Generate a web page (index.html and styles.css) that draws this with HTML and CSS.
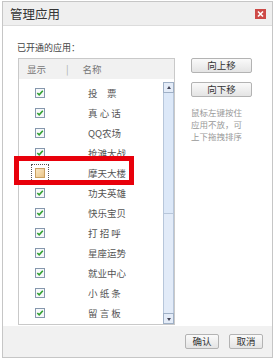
FILE: index.html
```html
<!DOCTYPE html>
<html lang="zh-CN">
<head>
    <meta charset="UTF-8">
    <title>管理应用</title>
    <link rel="stylesheet" href="styles.css">
</head>
<body>

    <div class="dialog">
        <div class="title-bar">
            <span class="title">管理应用</span>
            <span class="close">
                <svg width="11" height="10" viewBox="0 0 11 10">
                    <path d="M3 2.5 L8 7.5 M8 2.5 L3 7.5" stroke="#fff" stroke-width="1.6"/>
                </svg>
            </span>
        </div>

        <div class="main">
            <div class="label">已开通的应用：</div>
            <div class="content">
                <div class="list">
                    <div class="list-head">
                        <span class="col-show">显示</span>
                        <span class="sep">|</span>
                        <span class="col-name">名称</span>
                    </div>
                    <div class="list-body">
                        <div class="rows">
                            <div class="row"><i class="check"></i><span class="name">投　票</span></div>
                            <div class="row"><i class="check"></i><span class="name">真 心 话</span></div>
                            <div class="row"><i class="check"></i><span class="name">QQ农场</span></div>
                            <div class="row"><i class="check"></i><span class="name">抢滩大战</span></div>
                            <div class="row"><i class="check selected"></i><span class="name">摩天大楼</span></div>
                            <div class="row"><i class="check"></i><span class="name">功夫英雄</span></div>
                            <div class="row"><i class="check"></i><span class="name">快乐宝贝</span></div>
                            <div class="row"><i class="check"></i><span class="name">打 招 呼</span></div>
                            <div class="row"><i class="check"></i><span class="name">星座运势</span></div>
                            <div class="row"><i class="check"></i><span class="name">就业中心</span></div>
                            <div class="row"><i class="check"></i><span class="name">小 纸 条</span></div>
                            <div class="row"><i class="check"></i><span class="name">留 言 板</span></div>
                        </div>
                        <div class="scrollbar">
                            <div class="arrow up"></div>
                            <div class="thumb"></div>
                            <div class="track"></div>
                            <div class="arrow down"></div>
                        </div>
                    </div>
                    <div class="highlight"></div>
                </div>

                <div class="side">
                    <button class="btn move">向上移</button>
                    <button class="btn move">向下移</button>
                    <p class="hint">鼠标左键按住<br>应用不放，可<br>上下拖拽排序</p>
                </div>
            </div>
        </div>

        <div class="footer">
            <button class="btn small">确认</button>
            <button class="btn small">取消</button>
        </div>
    </div>

</body>
</html>
```

FILE: styles.css
```css
body {
    margin: 0;
    background: #fff;
    font-family: "Noto Sans CJK SC", "Noto Sans", sans-serif;
}
.dialog {
    width: 269px;
    height: 355px;
    margin: 1px 0 0 2px;
    border: 1px solid #c6c6c6;
    display: flex;
    flex-direction: column;
    background: #fff;
}
.title-bar {
    height: 23px;
    background: #efefef;
    border-bottom: 1px solid #dcdcdc;
    display: flex;
    align-items: center;
    justify-content: space-between;
    padding: 0 6px 0 7px;
}
.title {
    font-size: 12.5px;
    color: #333;
    line-height: 14px;
}
.close {
    width: 11px;
    height: 10px;
    background: #cd4a47;
    display: flex;
}
.main {
    flex: 1;
    padding: 16px 0 0 14px;
}
.label {
    font-size: 9px;
    line-height: 12px;
    color: #444;
    margin-bottom: 4px;
}
.content {
    display: flex;
    align-items: flex-start;
    padding-left: 1px;
}
.list {
    position: relative;
    width: 155px;
    height: 265px;
    border: 1px solid #c9c9c9;
    background: #fff;
}
.list-head {
    height: 20px;
    background: #f1f1f1;
    display: flex;
    align-items: center;
    font-size: 9.5px;
    color: #777;
}
.col-show {
    margin-left: 8px;
}
.sep {
    margin-left: 20px;
    color: #aaa;
}
.col-name {
    margin-left: 14px;
}
.list-body {
    display: flex;
    height: 245px;
}
.rows {
    flex: 1;
    padding-top: 4px;
}
.row {
    height: 20px;
    display: flex;
    align-items: center;
}
.check {
    width: 8px;
    height: 8px;
    margin-left: 16px;
    border: 1px solid #8597ad;
    background: #f6f8fa url("data:image/svg+xml,%3Csvg xmlns='http://www.w3.org/2000/svg' width='8' height='8'%3E%3Cpath d='M1.3 4 L3.2 5.8 L6.8 1.8' fill='none' stroke='%2330a030' stroke-width='1.6'/%3E%3C/svg%3E") no-repeat center;
}
.check.selected {
    background: linear-gradient(135deg, #fbe9c4, #e9c488);
    border-color: #c9a061;
    outline: 1px dotted #555;
    outline-offset: 3px;
}
.name {
    margin-left: 43px;
    font-size: 9.5px;
    color: #555;
    white-space: pre;
}
.scrollbar {
    width: 11px;
    margin-top: 3px;
    display: flex;
    flex-direction: column;
}
.arrow {
    height: 11px;
    background: #e4ecf8;
    border: 1px solid #9fb0c6;
    box-sizing: border-box;
    position: relative;
}
.arrow::after {
    content: "";
    position: absolute;
    left: 3px;
    border-left: 2px solid transparent;
    border-right: 2px solid transparent;
}
.arrow.up::after {
    top: 3px;
    border-bottom: 3px solid #445;
}
.arrow.down::after {
    top: 4px;
    border-top: 3px solid #445;
}
.thumb {
    height: 121px;
    background: #dce8f8;
    border: 1px solid #b7c6da;
    border-top: none;
    box-sizing: border-box;
}
.track {
    flex: 1;
    background: #e2ebf8;
    border-left: 1px solid #b7c6da;
    border-right: 1px solid #b7c6da;
}
.highlight {
    position: absolute;
    left: -5px;
    top: 97px;
    width: 110px;
    height: 19px;
    border: 5px solid #e8000b;
}
.side {
    margin-left: 16px;
    width: 61px;
    display: flex;
    flex-direction: column;
}
.btn {
    height: 15px;
    padding: 0;
    border: 1px solid #b3b3b3;
    border-radius: 2px;
    background: linear-gradient(#fafafa, #e4e4e4);
    font-family: "Noto Sans CJK SC", sans-serif;
    font-size: 9.5px;
    line-height: 13px;
    color: #333;
}
.move {
    width: 61px;
    margin-bottom: 9px;
}
.hint {
    margin: 0;
    font-size: 8.5px;
    line-height: 12px;
    color: #999;
}
.footer {
    height: 31px;
    background: #f1f1f1;
    display: flex;
    justify-content: flex-end;
    align-items: flex-start;
    gap: 10px;
    padding: 8px 9px 0 0;
    box-sizing: border-box;
}
.small {
    width: 34px;
}
```
